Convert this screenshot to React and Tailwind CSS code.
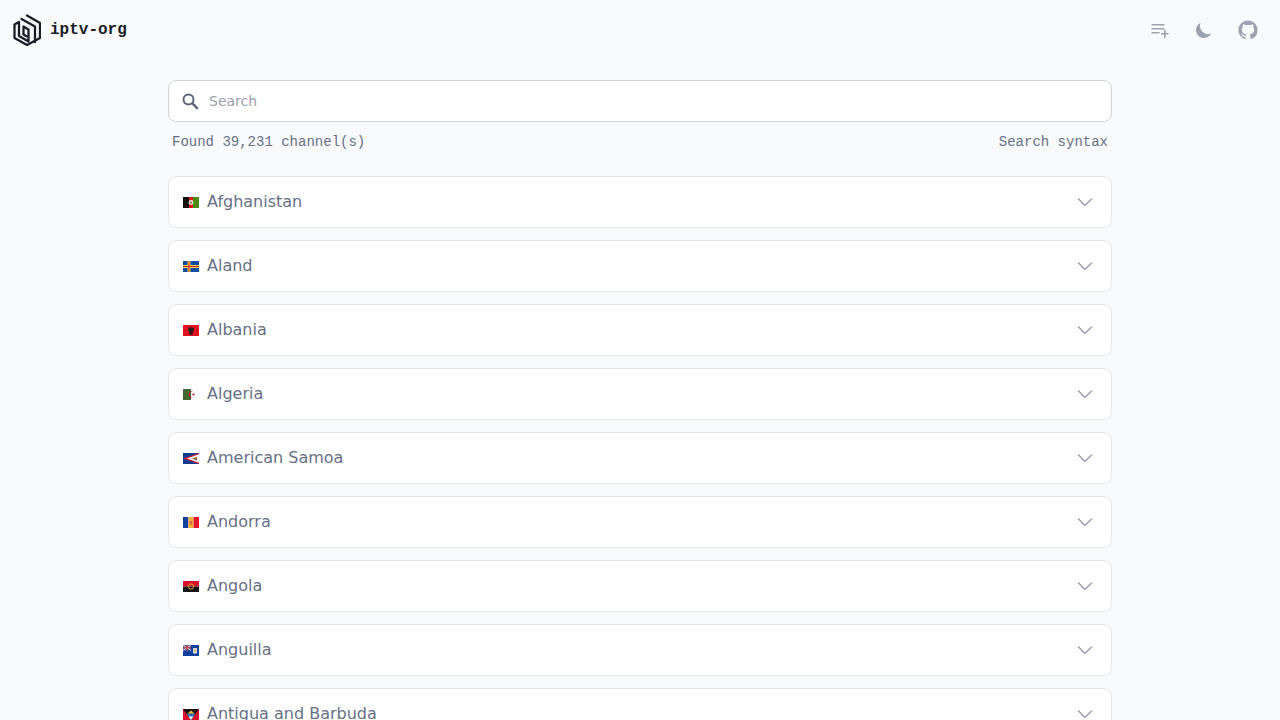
import React from 'react';

const Logo = () => (
    <svg width="28" height="32" viewBox="0 0 28 32" fill="none" stroke="#1a1d26" strokeWidth="2.300" strokeLinejoin="round" strokeLinecap="round">
        <path d="M14 1.500 27 9v15l-13 7-12.500-7V10.500L6 8" />
        <path d="M8.500 5l13.500 7.500v15.500" />
        <path d="M6 8.500v13.500l9.500 5.500V15.500L10.500 12.500v8l3 1.700" />
    </svg>
);

const PlaylistIcon = () => (
    <svg width="24" height="24" viewBox="0 0 24 24" fill="#9ca3af">
        <path d="M3.500 6h13v1.600h-13zM3.500 10h13v1.600h-13zM3.500 14h8v1.600h-8zM16 12h1.600v3h3v1.600h-3v3.400H16v-3.400h-3V15h3z" />
    </svg>
);

const MoonIcon = () => (
    <svg width="24" height="24" viewBox="-2 -2 24 24" fill="#9ca3af">
        <path d="M17.293 13.293A8 8 0 0 1 6.707 2.707a8.001 8.001 0 1 0 10.586 10.586z" />
    </svg>
);

const GithubIcon = () => (
    <svg width="24" height="24" viewBox="-2 -2 20 20" fill="#9ca3af">
        <path d="M8 0C3.58 0 0 3.58 0 8c0 3.540 2.290 6.530 5.470 7.590.400.070.550-.170.550-.380 0-.190-.010-.820-.010-1.490-2.010.370-2.530-.490-2.690-.940-.090-.230-.480-.940-.820-1.130-.280-.150-.680-.520-.010-.530.630-.010 1.080.580 1.230.820.720 1.210 1.870.870 2.330.660.070-.520.280-.870.510-1.070-1.780-.200-3.640-.890-3.640-3.950 0-.870.310-1.590.820-2.150-.080-.200-.360-1.020.080-2.120 0 0 .670-.210 2.200.820.640-.180 1.320-.270 2-.270s1.360.090 2 .270c1.530-1.040 2.200-.820 2.200-.820.440 1.100.160 1.920.080 2.120.510.560.820 1.270.820 2.150 0 3.070-1.870 3.750-3.650 3.950.290.250.540.730.540 1.480 0 1.070-.010 1.930-.010 2.200 0 .210.150.460.550.380A8.010 8.010 0 0 0 16 8c0-4.420-3.580-8-8-8z" />
    </svg>
);

const SearchIcon = () => (
    <svg width="20" height="20" viewBox="0 0 20 20" fill="none" stroke="#5b6478" strokeWidth="2">
        <circle cx="7.500" cy="8.500" r="5" />
        <path d="M11.200 12.200l5.600 5.600" strokeWidth="2.400" />
    </svg>
);

const Chevron = () => (
    <svg width="20" height="20" viewBox="0 0 20 20" fill="none" stroke="#9ca3af" strokeWidth="1.500" strokeLinecap="round" strokeLinejoin="round">
        <path d="M3.500 7 10 13.500 16.500 7" />
    </svg>
);

// Flags, drawn small on purpose: they come out about 16x11 in the page
const flags = {
    af: (
        <>
            <rect width="6" height="11" fill="#111" />
            <rect x="6" width="4" height="11" fill="#d32011" />
            <rect x="10" width="6" height="11" fill="#4a8a10" />
            <circle cx="8" cy="5.500" r="2.400" fill="#f3e9d8" />
            <circle cx="8" cy="5.500" r="1" fill="#a04030" />
        </>
    ),
    ax: (
        <>
            <rect width="16" height="11" fill="#0f4da0" />
            <rect x="4.500" width="3" height="11" fill="#f0d050" />
            <rect y="4" width="16" height="3" fill="#f0d050" />
            <rect x="5.500" width="1" height="11" fill="#d3232c" />
            <rect y="5" width="16" height="1" fill="#d3232c" />
        </>
    ),
    al: (
        <>
            <rect width="16" height="11" fill="#e3101f" />
            <path d="M8 1.500l1 1.500 2.500-.500-1 2.500 1 1-2 .800.600 2.200L8 10l-2.100-1.500.600-2.200-2-.800 1-1-1-2.500L7 3z" fill="#2a1a1a" />
        </>
    ),
    dz: (
        <>
            <rect width="8" height="11" fill="#3f6b30" />
            <rect x="8" width="8" height="11" fill="#fafafa" />
            <path d="M10 2.400a3.300 3.300 0 1 0 0 6.200 2.600 2.600 0 1 1 0-6.200z" fill="#d21034" />
            <circle cx="10.500" cy="5.500" r="1.100" fill="#d21034" />
        </>
    ),
    as: (
        <>
            <rect width="16" height="11" fill="#0e3a90" />
            <path d="M16 0 0 5.500 16 11z" fill="#c8243c" />
            <path d="M16 1.300 4 5.500 16 9.700z" fill="#f4f4f4" />
            <path d="M14 4 9 5.500l5 2z" fill="#8a5a3a" />
        </>
    ),
    ad: (
        <>
            <rect width="5.400" height="11" fill="#1440a0" />
            <rect x="5.400" width="5.200" height="11" fill="#f0b040" />
            <rect x="10.600" width="5.400" height="11" fill="#e0142c" />
            <rect x="6.800" y="4" width="2.400" height="3.500" fill="#d06a40" />
        </>
    ),
    ao: (
        <>
            <rect width="16" height="5.500" fill="#d8102c" />
            <rect y="5.500" width="16" height="5.500" fill="#151515" />
            <circle cx="8" cy="5.500" r="2.600" fill="none" stroke="#e8b020" strokeWidth="0.900" />
        </>
    ),
    ai: (
        <>
            <rect width="16" height="11" fill="#10409c" />
            <rect width="8" height="5.500" fill="#5a5f98" />
            <path d="M0 0l8 5.500M8 0 0 5.500" stroke="#e8d0d8" strokeWidth="1" />
            <path d="M4 0v5.500M0 2.750h8" stroke="#c8404c" strokeWidth="1.200" />
            <rect x="10" y="3" width="4" height="5.500" rx="1" fill="#e8e4d8" />
            <circle cx="12" cy="5.500" r="1" fill="#d09040" />
        </>
    ),
    ag: (
        <>
            <rect width="16" height="11" fill="#d8102c" />
            <path d="M0 0h16L8 11z" fill="#111" />
            <path d="M3.500 4.500h9L8 11z" fill="#3070c0" />
            <path d="M5.500 7.500h5L8 11z" fill="#f4f4f4" />
            <path d="M4.500 4.500 8 1.500l3.500 3z" fill="#f0c030" />
        </>
    ),
    ar: (
        <>
            <rect width="16" height="11" fill="#74acdf" />
            <rect y="3.670" width="16" height="3.660" fill="#fff" />
            <circle cx="8" cy="5.500" r="1.200" fill="#f0c030" />
        </>
    ),
};

const countries = [
    ['af', 'Afghanistan'],
    ['ax', 'Aland'],
    ['al', 'Albania'],
    ['dz', 'Algeria'],
    ['as', 'American Samoa'],
    ['ad', 'Andorra'],
    ['ao', 'Angola'],
    ['ai', 'Anguilla'],
    ['ag', 'Antigua and Barbuda'],
    ['ar', 'Argentina'],
];

const CountryRow = ({ code, name }) => (
    <div className="h-[52px] shrink-0 bg-white border border-gray-200 rounded-lg flex items-center justify-between pl-[14px] pr-4">
        <div className="flex items-center gap-2 text-[#667085] text-base font-['DejaVu_Sans',sans-serif]">
            <svg width="16" height="11" viewBox="0 0 16 11" className="shrink-0">{flags[code]}</svg>
            <span>{name}</span>
        </div>
        <Chevron />
    </div>
);

export default function App() {
    return (
        <div className="h-screen overflow-hidden bg-[#f9fafc]">
            <header className="h-[60px] flex items-center justify-between pl-[13px] pr-5">
                <div className="flex items-center gap-[9px]">
                    <Logo />
                    <span className="font-['Liberation_Mono',monospace] font-bold text-base text-[#1a1d26]">iptv-org</span>
                </div>
                <div className="flex items-center gap-5">
                    <PlaylistIcon />
                    <MoonIcon />
                    <GithubIcon />
                </div>
            </header>

            <main className="w-[944px] mx-auto pt-5">
                <div className="h-[42px] bg-white border border-gray-300 rounded-lg flex items-center pl-3 gap-2">
                    <SearchIcon />
                    <span className="text-sm text-gray-400 font-['DejaVu_Sans',sans-serif]">Search</span>
                </div>
                <div className="flex justify-between px-1 mt-[10px] font-['Liberation_Mono',monospace] text-sm text-[#667085]">
                    <span>Found 39,231 channel(s)</span>
                    <span>Search syntax</span>
                </div>
                <div className="flex flex-col gap-3 mt-6">
                    {countries.map(([code, name]) => (
                        <CountryRow key={code} code={code} name={name} />
                    ))}
                </div>
            </main>
        </div>
    );
}
